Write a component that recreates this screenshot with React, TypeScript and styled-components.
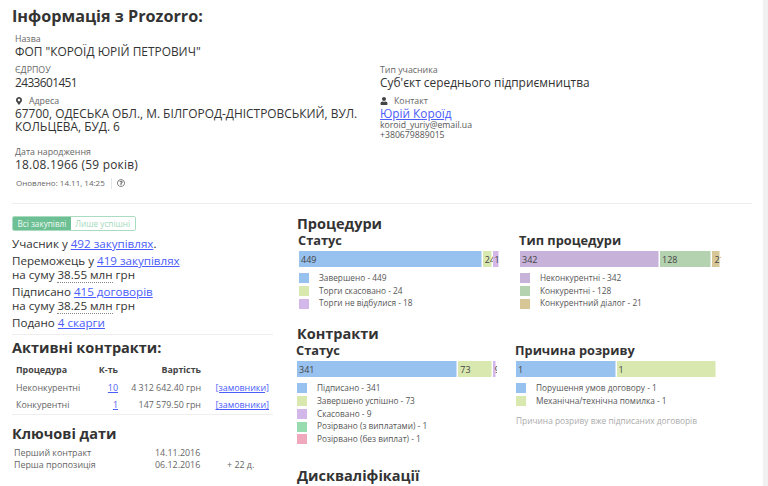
import React from "react";
import styled, { createGlobalStyle } from "styled-components";
import { FaMapMarkerAlt, FaRegQuestionCircle, FaUser } from "react-icons/fa";

const GlobalStyle = createGlobalStyle`
  html, body {
    margin: 0;
    height: 486px;
    overflow: hidden;
    background: #f1f1f1;
  }
  body {
    font-family: "Open Sans", "Noto Sans", "Liberation Sans", sans-serif;
    color: #333;
  }
  a {
    color: #4b5dfb;
  }
`;

const Page = styled.div`
  width: 763px;
  height: 486px;
  overflow: hidden;
  background: #fff;
  box-sizing: border-box;
  padding: 6px 11px 0 12px;
`;

const Title = styled.h1`
  margin: 0;
  font-size: 16.2px;
  line-height: 20px;
  font-weight: 700;
  color: #333;
`;

const InfoGrid = styled.div`
  display: grid;
  grid-template-columns: 365px 1fr;
  row-gap: 6px;
  margin-top: 7px;
  padding-left: 3px;
`;

const Field = styled.div<{ $wide?: boolean }>`
  grid-column: ${(p) => (p.$wide ? "1 / span 2" : "auto")};
`;

const Label = styled.div`
  display: flex;
  align-items: center;
  gap: 6px;
  font-size: 8.8px;
  line-height: 12px;
  color: #666;
  svg {
    font-size: 8px;
    color: #444;
  }
`;

const Value = styled.div<{ $spacing?: number }>`
  font-size: 11.9px;
  line-height: 13px;
  color: #333;
  letter-spacing: ${(p) => p.$spacing ?? 0}px;
`;

const NameLink = styled.a`
  display: block;
  font-size: 11.8px;
  line-height: 13px;
`;

const Small = styled.div`
  font-size: 8.7px;
  line-height: 10px;
  color: #555;
`;

const Updated = styled.div`
  display: flex;
  align-items: center;
  gap: 5px;
  margin: 6px 0 0 4px;
  font-size: 8px;
  line-height: 12px;
  color: #666;
  svg {
    font-size: 8px;
  }
`;

const Pipe = styled.span`
  width: 1px;
  height: 11px;
  margin-left: 1px;
  background: #e6e6e6;
`;

const Divider = styled.hr<{ $top: number; $bottom: number }>`
  border: 0;
  height: 1px;
  background: #eee;
  margin: ${(p) => p.$top}px 0 ${(p) => p.$bottom}px;
`;

const Columns = styled.div`
  display: grid;
  grid-template-columns: 261px 1fr;
  column-gap: 24px;
`;

const Toggle = styled.div`
  display: flex;
  width: fit-content;
  height: 15px;
  margin-bottom: 6px;
  border: 1px solid #a9dcc0;
  border-radius: 2px;
  box-sizing: border-box;
  overflow: hidden;
`;

const ToggleItem = styled.span<{ $active?: boolean }>`
  display: flex;
  align-items: center;
  padding: 0 4.5px;
  font-size: 8.2px;
  background: ${(p) => (p.$active ? "#6dbf94" : "#fff")};
  color: ${(p) => (p.$active ? "#eefaf3" : "#a4d8bb")};
`;

const Stat = styled.p`
  margin: 3px 0 0;
  font-size: 11.6px;
  line-height: 14px;
  color: #333;
`;

const Dotted = styled.span`
  border-bottom: 1px dotted #888;
`;

const SubTitle = styled.h2`
  margin: 0;
  font-size: 14.5px;
  line-height: 18px;
  font-weight: 700;
  color: #333;
`;

const ContractTable = styled.div`
  display: grid;
  grid-template-columns: 80px 22px 83px 68px;
  margin: 4px 0 0 4px;
  font-size: 8.9px;
  line-height: 17.5px;
  color: #666;
`;

const Head = styled.div<{ $right?: boolean }>`
  font-weight: 700;
  color: #444;
  text-align: ${(p) => (p.$right ? "right" : "left")};
`;

const Cell = styled.div<{ $right?: boolean }>`
  text-align: ${(p) => (p.$right ? "right" : "left")};
  white-space: nowrap;
`;

const DateTable = styled.div`
  display: grid;
  grid-template-columns: 141px 72px 1fr;
  margin: 4px 0 0 2px;
  font-size: 8.9px;
  line-height: 12.7px;
  color: #666;
`;

const Section = styled.section<{ $top: number }>`
  margin-top: ${(p) => p.$top}px;
`;

const Charts = styled.div<{ $inset: number; $gap: number }>`
  display: grid;
  grid-template-columns: 201px 201px;
  column-gap: ${(p) => p.$gap}px;
  padding-left: ${(p) => p.$inset}px;
`;

const ChartTitle = styled.h3`
  margin: -1px 0 3px -1px;
  font-size: 12.8px;
  line-height: 16px;
  font-weight: 700;
  color: #333;
`;

const Bar = styled.div`
  display: flex;
  height: 16px;
  margin-bottom: 5px;
`;

const Segment = styled.div<{ $color: string }>`
  box-sizing: border-box;
  min-width: 0;
  overflow: hidden;
  text-indent: 2px;
  background: ${(p) => p.$color};
  box-shadow: inset -1.5px 0 #fff;
  font-size: 9px;
  line-height: 17px;
  color: #444;
`;

const LegendRow = styled.div<{ $color: string }>`
  display: flex;
  align-items: center;
  gap: 10px;
  font-size: 8.3px;
  line-height: 12.7px;
  color: #555;
  white-space: nowrap;
  &::before {
    content: "";
    width: 10px;
    height: 10px;
    background: ${(p) => p.$color};
  }
`;

const Note = styled.div`
  margin-top: 7px;
  font-size: 8.35px;
  line-height: 12px;
  color: #aaa;
  white-space: nowrap;
`;

const BLUE = "#97c1ee";
const LIME = "#d9e8ae";
const LILAC = "#d3b7e9";

type Item = { name: string; value: number; color: string };

const charts: Record<string, Item[]> = {
  procStatus: [
    { name: "Завершено", value: 449, color: BLUE },
    { name: "Торги скасовано", value: 24, color: LIME },
    { name: "Торги не відбулися", value: 18, color: LILAC },
  ],
  procType: [
    { name: "Неконкурентні", value: 342, color: "#c7b3d9" },
    { name: "Конкурентні", value: 128, color: "#b4d2b0" },
    { name: "Конкурентний діалог", value: 21, color: "#d8c796" },
  ],
  contractStatus: [
    { name: "Підписано", value: 341, color: BLUE },
    { name: "Завершено успішно", value: 73, color: LIME },
    { name: "Скасовано", value: 9, color: LILAC },
    { name: "Розірвано (з виплатами)", value: 1, color: "#97dcae" },
    { name: "Розірвано (без виплат)", value: 1, color: "#f0a8bc" },
  ],
  reason: [
    { name: "Порушення умов договору", value: 1, color: BLUE },
    { name: "Механічна/технічна помилка", value: 1, color: LIME },
  ],
};

function Chart({ title, items, note }: { title: string; items: Item[]; note?: string }) {
  const total = items.reduce((sum, i) => sum + i.value, 0);
  return (
    <div>
      <ChartTitle>{title}</ChartTitle>
      <Bar>
        {items.map((i) => {
          const share = i.value / total;
          // slivers under a pixel are eaten by the white separator
          return (
            <Segment
              key={i.name}
              $color={share < 0.005 ? "#fff" : i.color}
              style={{ width: `${share * 100}%` }}
            >
              {share < 0.005 ? "" : i.value}
            </Segment>
          );
        })}
      </Bar>
      {items.map((i) => (
        <LegendRow key={i.name} $color={i.color}>
          {i.name} - {i.value}
        </LegendRow>
      ))}
      {note && <Note>{note}</Note>}
    </div>
  );
}

export default function App() {
  return (
    <Page>
      <GlobalStyle />
      <Title>Інформація з Prozorro:</Title>
      <InfoGrid>
        <Field $wide>
          <Label>Назва</Label>
          <Value>ФОП "КОРОЇД ЮРІЙ ПЕТРОВИЧ"</Value>
        </Field>
        <Field>
          <Label>ЄДРПОУ</Label>
          <Value $spacing={-0.6}>2433601451</Value>
        </Field>
        <Field>
          <Label>Тип учасника</Label>
          <Value>Суб'єкт середнього підприємництва</Value>
        </Field>
        <Field>
          <Label>
            <FaMapMarkerAlt />
            Адреса
          </Label>
          <Value>
            67700, ОДЕСЬКА ОБЛ., М. БІЛГОРОД-ДНІСТРОВСЬКИЙ, ВУЛ.
            <br />
            КОЛЬЦЕВА, БУД. 6
          </Value>
        </Field>
        <Field>
          <Label>
            <FaUser />
            Контакт
          </Label>
          <NameLink href="#">Юрій Короїд</NameLink>
          <Small>koroid_yuriy@email.ua</Small>
          <Small>+380679889015</Small>
        </Field>
        <Field $wide>
          <Label>Дата народження</Label>
          <Value $spacing={0.25}>18.08.1966 (59 років)</Value>
        </Field>
      </InfoGrid>
      <Updated>
        Оновлено: 14.11, 14:25
        <Pipe />
        <FaRegQuestionCircle />
      </Updated>
      <Divider $top={14} $bottom={12} />
      <Columns>
        <div>
          <Toggle>
            <ToggleItem $active>Всі закупівлі</ToggleItem>
            <ToggleItem>Лише успішні</ToggleItem>
          </Toggle>
          <Stat>
            Учасник у <a href="#">492 закупівлях</a>.
          </Stat>
          <Stat>
            Переможець у <a href="#">419 закупівлях</a>
            <br />
            на суму <Dotted>38.55 млн</Dotted> грн
          </Stat>
          <Stat>
            Підписано <a href="#">415 договорів</a>
            <br />
            на суму <Dotted>38.25 млн</Dotted> грн
          </Stat>
          <Stat>
            Подано <a href="#">4 скарги</a>
          </Stat>
          <Divider $top={4} $bottom={4} />
          <SubTitle>Активні контракти:</SubTitle>
          <ContractTable>
            <Head>Процедура</Head>
            <Head $right>К-ть</Head>
            <Head $right>Вартість</Head>
            <Head />
            <Cell>Неконкурентні</Cell>
            <Cell $right>
              <a href="#">10</a>
            </Cell>
            <Cell $right>4 312 642.40 грн</Cell>
            <Cell $right>
              <a href="#">[замовники]</a>
            </Cell>
            <Cell>Конкурентні</Cell>
            <Cell $right>
              <a href="#">1</a>
            </Cell>
            <Cell $right>147 579.50 грн</Cell>
            <Cell $right>
              <a href="#">[замовники]</a>
            </Cell>
          </ContractTable>
          <Divider $top={0} $bottom={10} />
          <SubTitle>Ключові дати</SubTitle>
          <DateTable>
            <Cell>Перший контракт</Cell>
            <Cell>14.11.2016</Cell>
            <Cell />
            <Cell>Перша пропозиція</Cell>
            <Cell>06.12.2016</Cell>
            <Cell>+ 22 д.</Cell>
          </DateTable>
        </div>
        <div>
          <Section $top={-1}>
            <SubTitle>Процедури</SubTitle>
            <Charts $inset={2} $gap={20}>
              <Chart title="Статус" items={charts.procStatus} />
              <Chart title="Тип процедури" items={charts.procType} />
            </Charts>
          </Section>
          <Section $top={15}>
            <SubTitle>Контракти</SubTitle>
            <Charts $inset={0} $gap={18}>
              <Chart title="Статус" items={charts.contractStatus} />
              <Chart
                title="Причина розриву"
                items={charts.reason}
                note="Причина розриву вже підписаних договорів"
              />
            </Charts>
          </Section>
          <Section $top={21}>
            <SubTitle>Дискваліфікації</SubTitle>
          </Section>
        </div>
      </Columns>
    </Page>
  );
}
